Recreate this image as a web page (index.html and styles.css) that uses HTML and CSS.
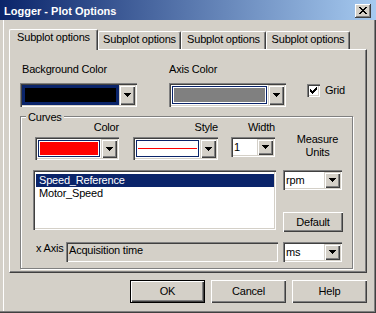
FILE: index.html
```html
<!DOCTYPE html>
<html lang="en">
<head>
  <meta charset="UTF-8">
  <title>Logger - Plot Options</title>
  <link rel="stylesheet" href="styles.css">
</head>
<body>
  <div class="window">
    <div class="titlebar">
      <span class="title">Logger - Plot Options</span>
      <div class="close-btn">
        <svg width="8" height="7" viewBox="0 0 8 7" shape-rendering="crispEdges">
          <path d="M0 0h2v1H0zM6 0h2v1H6zM1 1h2v1H1zM5 1h2v1H5zM2 2h4v1H2zM3 3h2v1H3zM2 4h4v1H2zM1 5h2v1H1zM5 5h2v1H5zM0 6h2v1H0zM6 6h2v1H6z" fill="#000"/>
        </svg>
      </div>
    </div>

    <div class="dialog-body">
      <div class="tabs">
        <div class="tab active">Subplot options</div>
        <div class="tab tab2">Subplot options</div>
        <div class="tab tab3">Subplot options</div>
        <div class="tab tab4">Subplot options</div>
      </div>

      <div class="tab-panel">
        <div class="color-row">
          <div class="color-field">
            <div class="label bg-label">Background Color</div>
            <div class="combo big-combo">
              <div class="combo-value highlight">
                <div class="swatch-frame"><div class="swatch black"></div></div>
              </div>
              <div class="combo-btn"><svg class="arrow" width="7" height="4" viewBox="0 0 7 4" shape-rendering="crispEdges"><path d="M0 0h7v1H0zM1 1h5v1H1zM2 2h3v1H2zM3 3h1v1H3z"/></svg></div>
            </div>
          </div>
          <div class="color-field axis-field">
            <div class="label">Axis Color</div>
            <div class="combo big-combo">
              <div class="combo-value">
                <div class="swatch-frame"><div class="swatch gray"></div></div>
              </div>
              <div class="combo-btn"><svg class="arrow" width="7" height="4" viewBox="0 0 7 4" shape-rendering="crispEdges"><path d="M0 0h7v1H0zM1 1h5v1H1zM2 2h3v1H2zM3 3h1v1H3z"/></svg></div>
            </div>
          </div>
          <div class="checkbox">
            <span class="check-box">
              <svg width="7" height="7" viewBox="0 0 7 7" shape-rendering="crispEdges"><path d="M0 2h1v3H0zM1 3h1v3H1zM2 4h1v3H2zM3 3h1v3H3zM4 2h1v3H4zM5 1h1v3H5zM6 0h1v3H6z"/></svg>
            </span>
            <span>Grid</span>
          </div>
        </div>

        <div class="group">
          <div class="group-title">Curves</div>

          <div class="curve-settings">
            <div class="setting color-setting">
              <div class="label right">Color</div>
              <div class="combo mid-combo">
                <div class="combo-value">
                  <div class="swatch-frame"><div class="swatch red"></div></div>
                </div>
                <div class="combo-btn"><svg class="arrow" width="7" height="4" viewBox="0 0 7 4" shape-rendering="crispEdges"><path d="M0 0h7v1H0zM1 1h5v1H1zM2 2h3v1H2zM3 3h1v1H3z"/></svg></div>
              </div>
            </div>
            <div class="setting style-setting">
              <div class="label right">Style</div>
              <div class="combo mid-combo">
                <div class="combo-value">
                  <div class="swatch-frame"><div class="swatch line"></div></div>
                </div>
                <div class="combo-btn"><svg class="arrow" width="7" height="4" viewBox="0 0 7 4" shape-rendering="crispEdges"><path d="M0 0h7v1H0zM1 1h5v1H1zM2 2h3v1H2zM3 3h1v1H3z"/></svg></div>
              </div>
            </div>
            <div class="setting width-setting">
              <div class="label right">Width</div>
              <div class="combo text-combo">
                <div class="combo-value text-value">1</div>
                <div class="combo-btn"><svg class="arrow" width="7" height="4" viewBox="0 0 7 4" shape-rendering="crispEdges"><path d="M0 0h7v1H0zM1 1h5v1H1zM2 2h3v1H2zM3 3h1v1H3z"/></svg></div>
              </div>
            </div>
            <div class="units-label">Measure<br>Units</div>
          </div>

          <div class="list-row">
            <div class="listbox">
              <div class="list-item selected">Speed_Reference</div>
              <div class="list-item">Motor_Speed</div>
            </div>
            <div class="side-stack">
              <div class="combo text-combo units-combo">
                <div class="combo-value text-value">rpm</div>
                <div class="combo-btn"><svg class="arrow" width="7" height="4" viewBox="0 0 7 4" shape-rendering="crispEdges"><path d="M0 0h7v1H0zM1 1h5v1H1zM2 2h3v1H2zM3 3h1v1H3z"/></svg></div>
              </div>
              <div class="btn default-btn">Default</div>
            </div>
          </div>

          <div class="axis-row">
            <span class="axis-label">x Axis</span>
            <div class="text-field">Acquisition time</div>
            <div class="combo text-combo units-combo">
              <div class="combo-value text-value">ms</div>
              <div class="combo-btn"><svg class="arrow" width="7" height="4" viewBox="0 0 7 4" shape-rendering="crispEdges"><path d="M0 0h7v1H0zM1 1h5v1H1zM2 2h3v1H2zM3 3h1v1H3z"/></svg></div>
            </div>
          </div>
        </div>
      </div>

      <div class="button-row">
        <div class="btn dialog-btn default">OK</div>
        <div class="btn dialog-btn">Cancel</div>
        <div class="btn dialog-btn">Help</div>
      </div>
    </div>
  </div>
</body>
</html>
```

FILE: styles.css
```css
body {
  margin: 0;
  font-family: "Liberation Sans", Arial, sans-serif;
  font-size: 11px;
  line-height: 13px;
  letter-spacing: -0.2px;
  color: #000;
  background: #d4d0c8;
}

.window {
  width: 376px;
  height: 313px;
  box-sizing: border-box;
  background: #d4d0c8;
  box-shadow: inset -1px -1px 0 #404040, inset -2px -2px 0 #808080, inset 3px 0 0 #d4d0c8, inset 4px 0 0 #fff;
  overflow: hidden;
}

/* title bar */
.titlebar {
  height: 20px;
  box-sizing: border-box;
  padding: 5px 5px 0 4px;
  display: flex;
  align-items: flex-start;
  background: linear-gradient(to right, #0a246a, #a6caf0);
}

.title {
  flex: 1;
  color: #fff;
  font-weight: bold;
  letter-spacing: 0;
}

.close-btn {
  width: 16px;
  height: 14px;
  margin-top: -1px;
  box-sizing: border-box;
  padding: 3px 0 0 4px;
  background: #d4d0c8;
  box-shadow: inset -1px -1px 0 #404040, inset 1px 1px 0 #fff, inset -2px -2px 0 #808080;
}

.close-btn svg {
  display: block;
}

.dialog-body {
  padding: 9px 9px 0 9px;
}

/* tabs */
.tabs {
  display: flex;
  align-items: flex-end;
  height: 20px;
}

.tab {
  height: 18px;
  box-sizing: border-box;
  padding-top: 1px;
  text-align: center;
  border-top: 1px solid #fff;
  border-left: 1px solid #fff;
  border-right: 1px solid #404040;
  border-radius: 2px 2px 0 0;
  box-shadow: inset -1px 0 0 #808080;
  background: #d4d0c8;
  white-space: nowrap;
}

.tab.active {
  width: 89px;
  height: 21px;
  margin-bottom: -1px;
  position: relative;
  z-index: 1;
}

.tab2 { width: 83px; }
.tab3 { width: 85px; }
.tab4 { width: 84px; }

.tab-panel {
  width: 358px;
  height: 224px;
  box-sizing: border-box;
  padding: 13px 0 0 10px;
  border: 1px solid;
  border-color: #fff #404040 #404040 #fff;
  box-shadow: inset -1px -1px 0 #808080;
}

/* first row: colors + grid */
.color-row {
  display: flex;
  align-items: flex-start;
}

.color-field {
  width: 117px;
}

.axis-field {
  margin-left: 32px;
}

.label {
  height: 13px;
  margin-bottom: 7px;
  white-space: nowrap;
}

.bg-label {
  padding-left: 2px;
}

.label.right {
  text-align: right;
  margin-bottom: 3px;
}

.checkbox {
  display: flex;
  align-items: center;
  margin: 21px 0 0 21px;
}

.check-box {
  width: 13px;
  height: 13px;
  box-sizing: border-box;
  padding: 3px;
  margin-right: 5px;
  background: #fff;
  box-shadow: inset 1px 1px 0 #808080, inset 2px 2px 0 #404040, inset -1px -1px 0 #fff, inset -2px -2px 0 #d4d0c8;
}

.check-box svg {
  display: block;
}

/* combo boxes */
.combo {
  display: flex;
  box-sizing: border-box;
  padding: 2px;
  background: #fff;
  box-shadow: inset 1px 1px 0 #808080, inset 2px 2px 0 #404040, inset -1px -1px 0 #fff, inset -2px -2px 0 #d4d0c8;
}

.big-combo {
  height: 24px;
}

.mid-combo {
  height: 23px;
}

.text-combo {
  height: 20px;
}

.combo-value {
  flex: 1;
  min-width: 0;
  padding: 1px;
}

.combo-value.highlight {
  background: #0a246a;
}

.swatch-frame {
  height: 100%;
  box-sizing: border-box;
  border: 1px solid #0a246a;
  padding: 1px;
}

.highlight .swatch-frame {
  background: #0a246a;
}

.swatch {
  height: 100%;
}

.swatch.black { background: #000; }
.swatch.gray { background: #808080; }
.swatch.red { background: #f00; }

.swatch.line {
  background: linear-gradient(#f00, #f00) center / 100% 1px no-repeat #fff;
}

.text-value {
  padding: 0 0 0 1px;
  line-height: 16px;
  white-space: nowrap;
}

.combo-btn {
  width: 16px;
  flex-shrink: 0;
  display: flex;
  align-items: center;
  justify-content: center;
  background: #d4d0c8;
  box-shadow: inset 1px 1px 0 #d4d0c8, inset 2px 2px 0 #fff, inset -1px -1px 0 #404040, inset -2px -2px 0 #808080;
}

.arrow {
  display: block;
}

/* curves group */
.group {
  position: relative;
  width: 333px;
  height: 153px;
  box-sizing: border-box;
  margin-top: 9px;
  border: 1px solid #808080;
  box-shadow: 1px 1px 0 #fff, inset 1px 1px 0 #fff;
}

.group-title {
  position: absolute;
  left: 5px;
  top: -6px;
  padding: 0 2px;
  background: #d4d0c8;
}

.curve-settings {
  display: flex;
  align-items: flex-start;
  padding-top: 4px;
}

.color-setting {
  width: 84px;
  margin-left: 14px;
}

.style-setting {
  width: 85px;
  margin-left: 14px;
}

.width-setting {
  width: 44px;
  margin-left: 13px;
}

.units-label {
  width: 69px;
  margin-left: 8px;
  padding-top: 12px;
  text-align: center;
}

.list-row {
  display: flex;
  margin-top: 10px;
}

.listbox {
  width: 243px;
  height: 60px;
  margin-left: 12px;
  box-sizing: border-box;
  padding: 4px 2px 2px 3px;
  background: #fff;
  box-shadow: inset 1px 1px 0 #808080, inset 2px 2px 0 #404040, inset -1px -1px 0 #fff, inset -2px -2px 0 #d4d0c8;
}

.list-item {
  height: 13px;
  padding-left: 3px;
  white-space: nowrap;
}

.list-item.selected {
  background: #0a246a;
  color: #fff;
}

.side-stack {
  width: 60px;
  height: 62px;
  margin-left: 7px;
  display: flex;
  flex-direction: column;
  justify-content: space-between;
}

.units-combo {
  width: 59px;
}

.axis-row {
  display: flex;
  align-items: flex-start;
  margin-top: 10px;
}

.axis-label {
  width: 30px;
  margin-left: 15px;
  white-space: nowrap;
}

.text-field {
  width: 212px;
  height: 20px;
  box-sizing: border-box;
  padding: 2px 0 0 3px;
  margin-right: 5px;
  background: #d4d0c8;
  box-shadow: inset 1px 1px 0 #808080, inset 2px 2px 0 #404040, inset -1px -1px 0 #fff, inset -2px -2px 0 #d4d0c8;
}

/* buttons */
.btn {
  box-sizing: border-box;
  display: flex;
  align-items: center;
  justify-content: center;
  background: #d4d0c8;
  box-shadow: inset 1px 1px 0 #fff, inset -1px -1px 0 #404040, inset -2px -2px 0 #808080;
}

.default-btn {
  width: 60px;
  height: 20px;
}

.button-row {
  display: flex;
  justify-content: flex-end;
  gap: 6px;
  margin-top: 7px;
}

.dialog-btn {
  width: 75px;
  height: 23px;
}

.dialog-btn.default {
  border: 1px solid #000;
}
```
